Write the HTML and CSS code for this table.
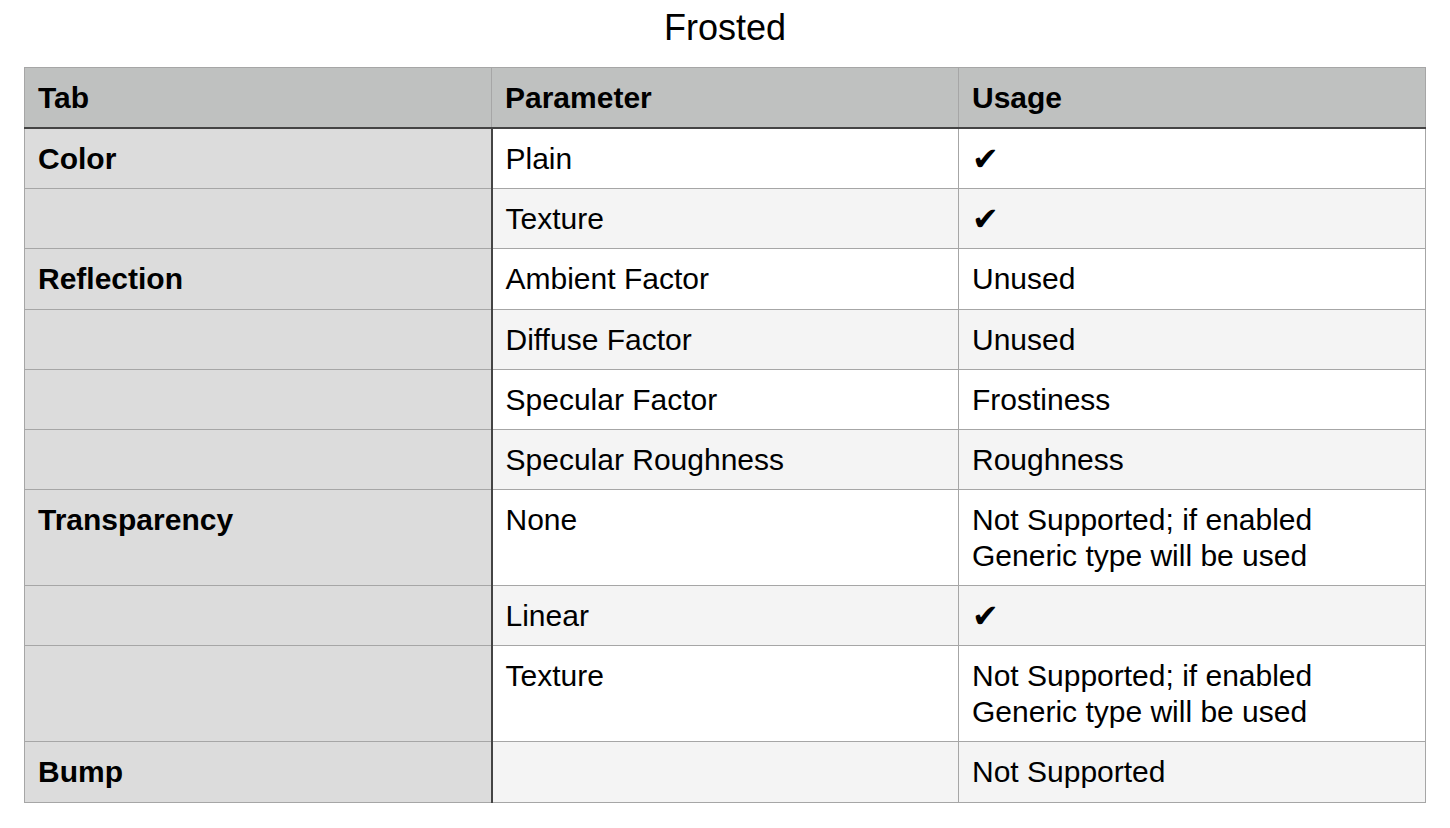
FILE: index.html
```html
<!DOCTYPE html>
<html>
<head>
<meta charset="utf-8">
<link rel="stylesheet" href="styles.css">
</head>
<body>
<h1 class="title">Frosted</h1>
<table class="grid">
  <thead>
    <tr><th class="c-tab">Tab</th><th>Parameter</th><th>Usage</th></tr>
  </thead>
  <tbody>
    <tr><td class="c-tab">Color</td><td>Plain</td><td class="check">✔</td></tr>
    <tr class="alt"><td class="c-tab"></td><td>Texture</td><td class="check">✔</td></tr>
    <tr><td class="c-tab">Reflection</td><td>Ambient Factor</td><td>Unused</td></tr>
    <tr class="alt"><td class="c-tab"></td><td>Diffuse Factor</td><td>Unused</td></tr>
    <tr><td class="c-tab"></td><td>Specular Factor</td><td>Frostiness</td></tr>
    <tr class="alt"><td class="c-tab"></td><td>Specular Roughness</td><td>Roughness</td></tr>
    <tr><td class="c-tab">Transparency</td><td>None</td><td>Not Supported; if enabled<br>Generic type will be used</td></tr>
    <tr class="alt"><td class="c-tab"></td><td>Linear</td><td class="check">✔</td></tr>
    <tr><td class="c-tab"></td><td>Texture</td><td>Not Supported; if enabled<br>Generic type will be used</td></tr>
    <tr class="alt"><td class="c-tab">Bump</td><td></td><td>Not Supported</td></tr>
  </tbody>
</table>
</body>
</html>
```
FILE: styles.css
```css
html, body {
  margin: 0;
  padding: 0;
  background: #ffffff;
}
body {
  font-family: "Liberation Sans", Arial, Helvetica, sans-serif;
  color: #000;
  padding: 0 24px;
}
.title {
  margin: 0;
  padding-top: 8px;
  height: 67px;
  box-sizing: border-box;
  text-align: center;
  font-weight: normal;
  font-size: 36px;
  line-height: 40px;
}
.grid {
  width: 1402px;
  border-collapse: collapse;
  table-layout: fixed;
  font-size: 30px;
  line-height: 36px;
}
.grid th, .grid td {
  border: 1px solid #a6a6a6;
  padding: 12px 13px 11px;
  text-align: left;
  vertical-align: top;
  height: 36px;
}
.grid td {
  height: 36.2px;
  box-sizing: content-box;
}
.grid th {
  background: #bfc1c0;
  font-weight: bold;
  border-bottom: 2px solid #444;
}
.grid td {
  background: #ffffff;
}
.grid tr.alt td {
  background: #f4f4f4;
}
.grid td.c-tab, .grid tr.alt td.c-tab {
  background: #dcdcdc;
  font-weight: bold;
  border-right: 2px solid #444;
}
.grid th.c-tab {
  border-right: 1px solid #a6a6a6;
}
.check {
  font-family: "DejaVu Sans", sans-serif;
  font-size: 32px;
}
```
